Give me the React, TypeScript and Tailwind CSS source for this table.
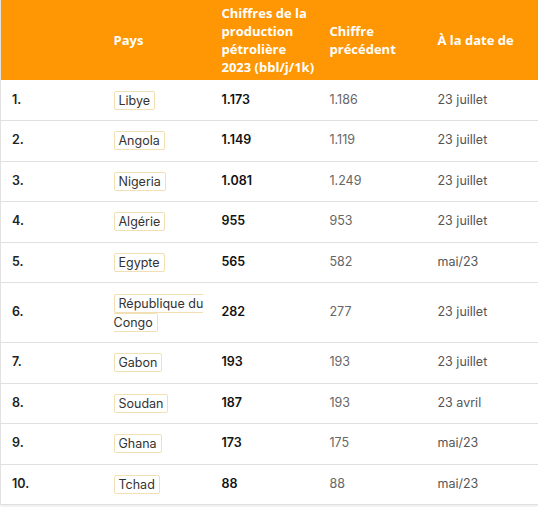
import React from "react";

const rows = [
  ["1.", "Libye", "1.173", "1.186", "23 juillet"],
  ["2.", "Angola", "1.149", "1.119", "23 juillet"],
  ["3.", "Nigeria", "1.081", "1.249", "23 juillet"],
  ["4.", "Algérie", "955", "953", "23 juillet"],
  ["5.", "Egypte", "565", "582", "mai/23"],
  ["6.", "République du Congo", "282", "277", "23 juillet"],
  ["7.", "Gabon", "193", "193", "23 juillet"],
  ["8.", "Soudan", "187", "193", "23 avril"],
  ["9.", "Ghana", "173", "175", "mai/23"],
  ["10.", "Tchad", "88", "88", "mai/23"],
];

export default function App() {
  return (
    <div className="w-[538px] h-[507px] bg-white">
      <table
        className="w-[538px] table-fixed border-collapse border-l border-[#e2e2e2] shadow-[0_2px_3px_rgba(0,0,0,0.08)]"
        style={{ fontFamily: "Inter, 'Noto Sans', sans-serif" }}
      >
        <colgroup>
          <col className="w-[102px]" />
          <col className="w-[108px]" />
          <col className="w-[108px]" />
          <col className="w-[108px]" />
          <col className="w-[112px]" />
        </colgroup>
        <thead>
          <tr
            className="bg-[#ff9603] h-[80px] text-white font-bold text-[13px] leading-[18px] text-left whitespace-nowrap"
            style={{ fontFamily: "'Open Sans', Lato, sans-serif" }}
          >
            <th className="pl-[11px] p-0"></th>
            <th className="pl-[11px] p-0">Pays</th>
            <th className="pl-[11px] pr-0 py-0">
              Chiffres de la<br />production<br />pétrolière<br />2023 (bbl/j/1k)
            </th>
            <th className="pl-[11px] pr-0 py-0">
              Chiffre<br />précédent
            </th>
            <th className="pl-[11px] p-0">À la date de</th>
          </tr>
        </thead>
        <tbody className="text-[12.5px] text-[#222]">
          {rows.map((r) => (
            <tr
              key={r[0]}
              className={`border-b border-[#e0e0e0] ${r[0] === "6." ? "h-[60px]" : "h-[40.5px]"}`}
            >
              <td className="pl-[11px] font-semibold">{r[0]}</td>
              <td className="pl-[11px] leading-[19px]">
                <span className="border border-[#f3dfb4] rounded-[2px] px-[4px] py-[1px] text-[#333] [box-decoration-break:slice]">
                  {r[1]}
                </span>
              </td>
              <td className="pl-[11px] font-semibold text-[#111]">{r[2]}</td>
              <td className="pl-[11px] text-[#666]">{r[3]}</td>
              <td className="pl-[11px] text-[#555]">{r[4]}</td>
            </tr>
          ))}
        </tbody>
      </table>
    </div>
  );
}
